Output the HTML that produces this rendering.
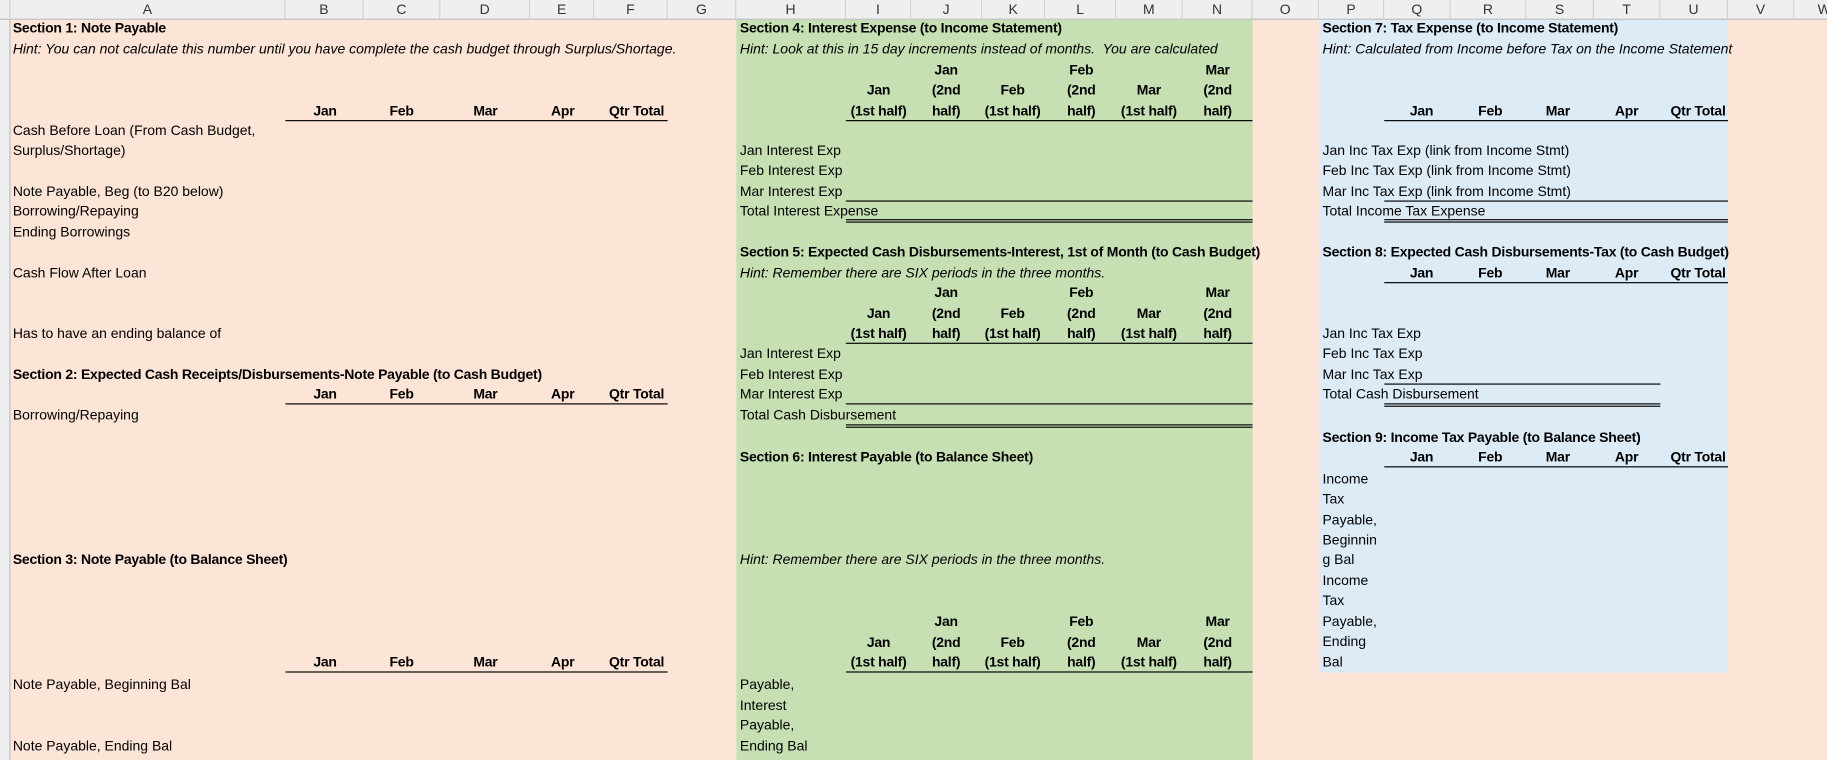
<!DOCTYPE html>
<html><head><meta charset="utf-8"><style>
html,body{margin:0;padding:0;width:1827px;height:760px;overflow:hidden;background:#FCE4D6}
#w{position:absolute;left:0;top:0;width:1568px;height:652px;transform:scale(1.16518,1.16564);transform-origin:0 0;font-family:"Liberation Sans",sans-serif;font-size:12px;color:#000;background:#FCE4D6}
.b{position:absolute}
.t{position:absolute;white-space:nowrap;line-height:17px;height:17px}
.bo{font-weight:bold;letter-spacing:-0.2px}
.i{font-style:italic}
.c{text-align:center;transform:translateX(-50%)}
.r{text-align:right;transform:translateX(-100%)}
.ln{position:absolute;height:1px;background:#000}
.hd{position:absolute;top:0;height:17px;background:#EFEFEF;border-bottom:1px solid #BDBDBD;border-right:1px solid #D0D0D0;box-sizing:border-box;text-align:center;line-height:17px;font-size:12px;color:#333}
</style></head><body><div id="w">
<div class="b" style="left:632px;top:17px;width:443px;height:635px;background:#C6E0B4"></div>
<div class="b" style="left:1132px;top:17px;width:351px;height:560px;background:#DDEBF7"></div>
<div class="b" style="left:0;top:17px;width:8px;height:635px;background:#EFEFEF;border-right:1px solid #BDBDBD"></div>

<div class="hd" style="left:0;width:9px"></div>
<div class="hd" style="left:9px;width:236px">A</div>
<div class="hd" style="left:245px;width:67px">B</div>
<div class="hd" style="left:312px;width:66px">C</div>
<div class="hd" style="left:378px;width:77px">D</div>
<div class="hd" style="left:455px;width:55px">E</div>
<div class="hd" style="left:510px;width:63px">F</div>
<div class="hd" style="left:573px;width:59px">G</div>
<div class="hd" style="left:632px;width:94px">H</div>
<div class="hd" style="left:726px;width:56px">I</div>
<div class="hd" style="left:782px;width:61px">J</div>
<div class="hd" style="left:843px;width:54px">K</div>
<div class="hd" style="left:897px;width:61px">L</div>
<div class="hd" style="left:958px;width:57px">M</div>
<div class="hd" style="left:1015px;width:60px">N</div>
<div class="hd" style="left:1075px;width:57px">O</div>
<div class="hd" style="left:1132px;width:56px">P</div>
<div class="hd" style="left:1188px;width:57px">Q</div>
<div class="hd" style="left:1245px;width:65px">R</div>
<div class="hd" style="left:1310px;width:58px">S</div>
<div class="hd" style="left:1368px;width:57px">T</div>
<div class="hd" style="left:1425px;width:58px">U</div>
<div class="hd" style="left:1483px;width:57px">V</div>
<div class="hd" style="left:1540px;width:40px;text-align:left;padding-left:20px">W</div>

<!-- Left -->
<div class="t bo" style="left:11px;top:16px">Section 1: Note Payable</div>
<div class="t i" style="left:11px;top:34px">Hint: You can not calculate this number until you have complete the cash budget through Surplus/Shortage.</div>
<div class="t bo r" style="left:289px;top:87px">Jan</div><div class="t bo r" style="left:355px;top:87px">Feb</div><div class="t bo r" style="left:427px;top:87px">Mar</div><div class="t bo r" style="left:493px;top:87px">Apr</div><div class="t bo r" style="left:570px;top:87px">Qtr Total</div>
<div class="ln" style="left:245px;top:103px;width:328px"></div>
<div class="t" style="left:11px;top:104px">Cash Before Loan (From Cash Budget,</div>
<div class="t" style="left:11px;top:121px">Surplus/Shortage)</div>
<div class="t" style="left:11px;top:156px">Note Payable, Beg (to B20 below)</div>
<div class="t" style="left:11px;top:173px">Borrowing/Repaying</div>
<div class="t" style="left:11px;top:191px">Ending Borrowings</div>
<div class="t" style="left:11px;top:226px">Cash Flow After Loan</div>
<div class="t" style="left:11px;top:278px">Has to have an ending balance of</div>
<div class="t bo" style="left:11px;top:313px">Section 2: Expected Cash Receipts/Disbursements-Note Payable (to Cash Budget)</div>
<div class="t bo r" style="left:289px;top:330px">Jan</div><div class="t bo r" style="left:355px;top:330px">Feb</div><div class="t bo r" style="left:427px;top:330px">Mar</div><div class="t bo r" style="left:493px;top:330px">Apr</div><div class="t bo r" style="left:570px;top:330px">Qtr Total</div>
<div class="ln" style="left:245px;top:346px;width:328px"></div>
<div class="t" style="left:11px;top:348px">Borrowing/Repaying</div>
<div class="t bo" style="left:11px;top:472px">Section 3: Note Payable (to Balance Sheet)</div>
<div class="t bo r" style="left:289px;top:560px">Jan</div><div class="t bo r" style="left:355px;top:560px">Feb</div><div class="t bo r" style="left:427px;top:560px">Mar</div><div class="t bo r" style="left:493px;top:560px">Apr</div><div class="t bo r" style="left:570px;top:560px">Qtr Total</div>
<div class="ln" style="left:245px;top:576px;width:328px"></div>
<div class="t" style="left:11px;top:579px">Note Payable, Beginning Bal</div>
<div class="t" style="left:11px;top:632px">Note Payable, Ending Bal</div>

<!-- Green -->
<div class="t bo" style="left:635px;top:16px">Section 4: Interest Expense (to Income Statement)</div>
<div class="t i" style="left:635px;top:34px">Hint: Look at this in 15 day increments instead of months.&nbsp; You are calculated</div>
<div class="t bo c" style="left:812px;top:52px">Jan</div><div class="t bo c" style="left:928px;top:52px">Feb</div><div class="t bo c" style="left:1045px;top:52px">Mar</div>
<div class="t bo c" style="left:754px;top:69px">Jan</div><div class="t bo c" style="left:812px;top:69px">(2nd</div><div class="t bo c" style="left:869px;top:69px">Feb</div><div class="t bo c" style="left:928px;top:69px">(2nd</div><div class="t bo c" style="left:986px;top:69px">Mar</div><div class="t bo c" style="left:1045px;top:69px">(2nd</div>
<div class="t bo c" style="left:754px;top:87px">(1st half)</div><div class="t bo c" style="left:812px;top:87px">half)</div><div class="t bo c" style="left:869px;top:87px">(1st half)</div><div class="t bo c" style="left:928px;top:87px">half)</div><div class="t bo c" style="left:986px;top:87px">(1st half)</div><div class="t bo c" style="left:1045px;top:87px">half)</div>
<div class="ln" style="left:726px;top:103px;width:349px"></div>
<div class="t" style="left:635px;top:121px">Jan Interest Exp</div>
<div class="t" style="left:635px;top:138px">Feb Interest Exp</div>
<div class="t" style="left:635px;top:156px">Mar Interest Exp</div>
<div class="ln" style="left:726px;top:172px;width:349px"></div>
<div class="t" style="left:635px;top:173px">Total Interest Expense</div>
<div class="ln" style="left:726px;top:188px;width:349px"></div><div class="ln" style="left:726px;top:190px;width:349px"></div>
<div class="t bo" style="left:635px;top:208px">Section 5: Expected Cash Disbursements-Interest, 1st of Month (to Cash Budget)</div>
<div class="t i" style="left:635px;top:226px">Hint: Remember there are SIX periods in the three months.</div>
<div class="t bo c" style="left:812px;top:243px">Jan</div><div class="t bo c" style="left:928px;top:243px">Feb</div><div class="t bo c" style="left:1045px;top:243px">Mar</div>
<div class="t bo c" style="left:754px;top:261px">Jan</div><div class="t bo c" style="left:812px;top:261px">(2nd</div><div class="t bo c" style="left:869px;top:261px">Feb</div><div class="t bo c" style="left:928px;top:261px">(2nd</div><div class="t bo c" style="left:986px;top:261px">Mar</div><div class="t bo c" style="left:1045px;top:261px">(2nd</div>
<div class="t bo c" style="left:754px;top:278px">(1st half)</div><div class="t bo c" style="left:812px;top:278px">half)</div><div class="t bo c" style="left:869px;top:278px">(1st half)</div><div class="t bo c" style="left:928px;top:278px">half)</div><div class="t bo c" style="left:986px;top:278px">(1st half)</div><div class="t bo c" style="left:1045px;top:278px">half)</div>
<div class="ln" style="left:726px;top:294px;width:349px"></div>
<div class="t" style="left:635px;top:295px">Jan Interest Exp</div>
<div class="t" style="left:635px;top:313px">Feb Interest Exp</div>
<div class="t" style="left:635px;top:330px">Mar Interest Exp</div>
<div class="ln" style="left:726px;top:346px;width:349px"></div>
<div class="t" style="left:635px;top:348px">Total Cash Disbursement</div>
<div class="ln" style="left:726px;top:364px;width:349px"></div><div class="ln" style="left:726px;top:366px;width:349px"></div>
<div class="t bo" style="left:635px;top:384px">Section 6: Interest Payable (to Balance Sheet)</div>
<div class="t i" style="left:635px;top:472px">Hint: Remember there are SIX periods in the three months.</div>
<div class="t bo c" style="left:812px;top:525px">Jan</div><div class="t bo c" style="left:928px;top:525px">Feb</div><div class="t bo c" style="left:1045px;top:525px">Mar</div>
<div class="t bo c" style="left:754px;top:543px">Jan</div><div class="t bo c" style="left:812px;top:543px">(2nd</div><div class="t bo c" style="left:869px;top:543px">Feb</div><div class="t bo c" style="left:928px;top:543px">(2nd</div><div class="t bo c" style="left:986px;top:543px">Mar</div><div class="t bo c" style="left:1045px;top:543px">(2nd</div>
<div class="t bo c" style="left:754px;top:560px">(1st half)</div><div class="t bo c" style="left:812px;top:560px">half)</div><div class="t bo c" style="left:869px;top:560px">(1st half)</div><div class="t bo c" style="left:928px;top:560px">half)</div><div class="t bo c" style="left:986px;top:560px">(1st half)</div><div class="t bo c" style="left:1045px;top:560px">half)</div>
<div class="ln" style="left:726px;top:576px;width:349px"></div>
<div class="t" style="left:635px;top:579px">Payable,</div>
<div class="t" style="left:635px;top:597px">Interest</div>
<div class="t" style="left:635px;top:614px">Payable,</div>
<div class="t" style="left:635px;top:632px">Ending Bal</div>

<!-- Blue -->
<div class="t bo" style="left:1135px;top:16px">Section 7: Tax Expense (to Income Statement)</div>
<div class="t i" style="left:1135px;top:34px">Hint: Calculated from Income before Tax on the Income Statement</div>
<div class="t bo c" style="left:1220px;top:87px">Jan</div><div class="t bo c" style="left:1279px;top:87px">Feb</div><div class="t bo c" style="left:1337px;top:87px">Mar</div><div class="t bo c" style="left:1396px;top:87px">Apr</div><div class="t bo r" style="left:1481px;top:87px">Qtr Total</div>
<div class="ln" style="left:1188px;top:103px;width:295px"></div>
<div class="t" style="left:1135px;top:121px">Jan Inc Tax Exp (link from Income Stmt)</div>
<div class="t" style="left:1135px;top:138px">Feb Inc Tax Exp (link from Income Stmt)</div>
<div class="t" style="left:1135px;top:156px">Mar Inc Tax Exp (link from Income Stmt)</div>
<div class="ln" style="left:1188px;top:172px;width:295px"></div>
<div class="t" style="left:1135px;top:173px">Total Income Tax Expense</div>
<div class="ln" style="left:1188px;top:188px;width:295px"></div><div class="ln" style="left:1188px;top:190px;width:295px"></div>
<div class="t bo" style="left:1135px;top:208px">Section 8: Expected Cash Disbursements-Tax (to Cash Budget)</div>
<div class="t bo c" style="left:1220px;top:226px">Jan</div><div class="t bo c" style="left:1279px;top:226px">Feb</div><div class="t bo c" style="left:1337px;top:226px">Mar</div><div class="t bo c" style="left:1396px;top:226px">Apr</div><div class="t bo r" style="left:1481px;top:226px">Qtr Total</div>
<div class="ln" style="left:1188px;top:242px;width:295px"></div>
<div class="t" style="left:1135px;top:278px">Jan Inc Tax Exp</div>
<div class="t" style="left:1135px;top:295px">Feb Inc Tax Exp</div>
<div class="t" style="left:1135px;top:313px">Mar Inc Tax Exp</div>
<div class="ln" style="left:1188px;top:329px;width:237px"></div>
<div class="t" style="left:1135px;top:330px">Total Cash Disbursement</div>
<div class="ln" style="left:1188px;top:346px;width:237px"></div><div class="ln" style="left:1188px;top:348px;width:237px"></div>
<div class="t bo" style="left:1135px;top:367px">Section 9: Income Tax Payable (to Balance Sheet)</div>
<div class="t bo c" style="left:1220px;top:384px">Jan</div><div class="t bo c" style="left:1279px;top:384px">Feb</div><div class="t bo c" style="left:1337px;top:384px">Mar</div><div class="t bo c" style="left:1396px;top:384px">Apr</div><div class="t bo r" style="left:1481px;top:384px">Qtr Total</div>
<div class="ln" style="left:1188px;top:400px;width:295px"></div>
<div class="t" style="left:1135px;top:403px">Income</div>
<div class="t" style="left:1135px;top:420px">Tax</div>
<div class="t" style="left:1135px;top:438px">Payable,</div>
<div class="t" style="left:1135px;top:455px">Beginnin</div>
<div class="t" style="left:1135px;top:472px">g Bal</div>
<div class="t" style="left:1135px;top:490px">Income</div>
<div class="t" style="left:1135px;top:507px">Tax</div>
<div class="t" style="left:1135px;top:525px">Payable,</div>
<div class="t" style="left:1135px;top:542px">Ending</div>
<div class="t" style="left:1135px;top:560px">Bal</div>
</div></body></html>
